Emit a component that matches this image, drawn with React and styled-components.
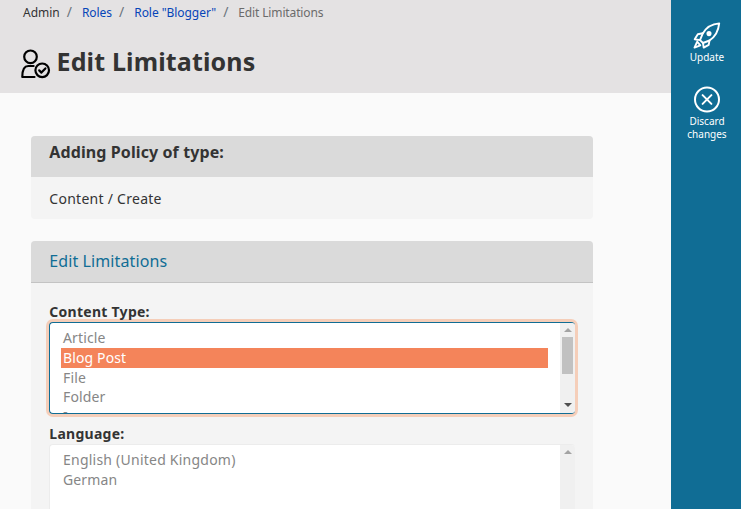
import React from "react";
import styled, { createGlobalStyle } from "styled-components";

const GlobalStyle = createGlobalStyle`
  * { box-sizing: border-box; }
  body {
    margin: 0;
    background: #fafafa;
    color: #333;
    font-family: "Noto Sans", sans-serif;
    overflow: hidden;
  }
`;

const Page = styled.div`
  display: flex;
  width: 741px;
  height: 509px;
  overflow: hidden;
`;

const Main = styled.main`
  width: 671px;
  flex: none;
`;

const Header = styled.header`
  height: 93px;
  padding-left: 23px;
  background: #e4e2e3;
`;

const Breadcrumbs = styled.nav`
  display: flex;
  height: 25px;
  font-size: 12px;
  line-height: 25px;
  white-space: pre;
`;

const Crumb = styled.span`
  color: ${(p) => (p.$current ? "#6b6b6b" : p.$link ? "#0645b8" : "#333")};
  letter-spacing: ${(p) => (p.$current ? "-0.13px" : p.$link ? "-0.05px" : "0")};

  &:not(:first-child)::before {
    content: "/";
    color: #6c757d;
    font-size: 14px;
    line-height: 1;
    padding: 0 10px 0 7px;
  }
`;

const TitleRow = styled.div`
  display: flex;
  align-items: center;
  gap: 5.5px;
  height: 36px;
  margin: 18px 0 0 -3px;

  svg { margin-top: 5px; }
`;

const Title = styled.h1`
  margin: 0;
  font-size: 25px;
  line-height: 36px;
  font-weight: 700;
  letter-spacing: 0.15px;
`;

const Content = styled.div`
  display: flex;
  flex-direction: column;
  gap: 22px;
  width: 562px;
  margin: 43px 0 0 31px;
`;

const Card = styled.section`
  border-radius: 4px;
  overflow: hidden;
  background: #f4f4f4;
`;

const CardHead = styled.h2`
  height: ${(p) => (p.$accent ? 42 : 41)}px;
  margin: 0;
  padding-left: 18.3px;
  background: #dadada;
  border-bottom: ${(p) => (p.$accent ? "1px solid #c3c3c3" : "0")};
  color: ${(p) => (p.$accent ? "#106d95" : "#333")};
  font-size: 16px;
  font-weight: ${(p) => (p.$accent ? 400 : 700)};
  line-height: ${(p) => (p.$accent ? 41 : 33)}px;
  letter-spacing: 0.1px;
`;

const CardText = styled.p`
  height: 42px;
  margin: 0;
  padding-left: 18.3px;
  font-size: 14px;
  line-height: 43px;
  letter-spacing: 0.27px;
`;

const Form = styled.div`
  height: 260px;
  padding: 19px 18px 0;
`;

const Label = styled.div`
  height: 20px;
  padding-left: 0.3px;
  font-size: 14px;
  font-weight: 700;
  line-height: 20px;
  letter-spacing: 0.27px;
`;

const ListBox = styled.div`
  display: flex;
  height: 92px;
  margin-bottom: 10px;
  border: 1px solid ${(p) => (p.$focused ? "#106d95" : "#ececec")};
  border-right: 0;
  border-radius: 4px;
  background: #fff;
  box-shadow: ${(p) => (p.$focused ? "0 0 0 3px #f5ceb9" : "none")};
  overflow: hidden;
`;

const Options = styled.div`
  flex: 1;
  padding: 5px 12px 0 11px;
`;

const Option = styled.div`
  height: ${(p) => (p.$selected ? 20 : 19.6)}px;
  padding-left: 2px;
  background: ${(p) => (p.$selected ? "#f4845a" : "transparent")};
  color: ${(p) => (p.$selected ? "#fff" : "#868686")};
  font-size: 14px;
  line-height: 19.6px;
  letter-spacing: ${(p) => (p.$wide ? 0.23 : 0.13)}px;
`;

const Track = styled.div`
  display: flex;
  flex-direction: column;
  align-items: center;
  width: 15px;
  margin-top: -1px;
  background: #f0f0f0;
`;

const Thumb = styled.div`
  width: 11px;
  height: 37px;
  background: #c1c1c1;
`;

const Arrow = styled.div`
  display: flex;
  align-items: center;
  justify-content: center;
  height: 15px;
  margin-top: ${(p) => (p.$down ? "auto" : "0")};
  margin-bottom: ${(p) => (p.$down ? "1px" : "0")};

  &::before {
    content: "";
    border: 4px solid transparent;
    border-top: ${(p) => (p.$down ? "4px solid #505050" : "0")};
    border-bottom: ${(p) => (p.$down ? "0" : "4px solid #a3a3a3")};
  }
`;

const Sidebar = styled.aside`
  display: flex;
  flex-direction: column;
  align-items: center;
  gap: 22px;
  width: 70px;
  padding: 22px 0 0 2px;
  background: #106d95;
`;

const Action = styled.button`
  display: flex;
  flex-direction: column;
  align-items: center;
  gap: 2px;
  width: 68px;
  padding: 0;
  border: 0;
  background: none;
  color: #fff;
  font: 10px/13px "Noto Sans", sans-serif;
`;

const UserCheckIcon = () => (
  <svg width="31" height="30" viewBox="0 0 31 30" fill="none" stroke="#000" strokeWidth="2.2" strokeLinecap="round" strokeLinejoin="round">
    <circle cx="10.5" cy="7.8" r="6.3" />
    <path d="M14.5 28H2.3c0-5.5 1.2-11 6-11h5.3" />
    <circle cx="22.2" cy="21.3" r="6.8" />
    <path d="m19.2 21.4 2.2 2.2 4-4.2" />
  </svg>
);

const RocketIcon = () => (
  <svg width="28" height="27" viewBox="0 0 28 27" fill="none" stroke="#fff" strokeWidth="1.9" strokeLinejoin="round" strokeLinecap="round">
    <path d="M26.2 1.4c-7 .5-13 4.2-16.4 10L7 18.1l3 2.9 6.5-2.5c5.8-3.7 8.9-9.6 9.7-17.1Z" />
    <path d="m9.8 11.2-5 1-3.1 5 5.3.9m9.5.4-.8 4.3-5 2.8-.7-4.6M4.2 19.6 1.5 25.6l5.8-2.3m-3.1-3.7 3.1 3.7" />
    <circle cx="16" cy="11.6" r="1.6" fill="#fff" />
  </svg>
);

const DiscardIcon = () => (
  <svg width="28" height="27" viewBox="0 0 28 27" fill="none" stroke="#fff" strokeWidth="2" strokeLinecap="round">
    <circle cx="14" cy="13.5" r="12" />
    <path d="m9.6 9.1 8.8 8.8m0-8.8-8.8 8.8" />
  </svg>
);

const SelectList = ({ options, selected, focused }) => (
  <ListBox $focused={focused}>
    <Options>
      {options.map((name) => (
        <Option key={name} $selected={name === selected} $wide={name.length > 12}>{name}</Option>
      ))}
    </Options>
    <Track>
      <Arrow />
      {focused && <Thumb />}
      {focused && <Arrow $down />}
    </Track>
  </ListBox>
);

export default function App() {
  return (
    <>
      <GlobalStyle />
      <Page>
        <Main>
          <Header>
            <Breadcrumbs>
              <Crumb>Admin</Crumb>
              <Crumb $link>Roles</Crumb>
              <Crumb $link>Role "Blogger"</Crumb>
              <Crumb $current>Edit Limitations</Crumb>
            </Breadcrumbs>
            <TitleRow>
              <UserCheckIcon />
              <Title>Edit Limitations</Title>
            </TitleRow>
          </Header>
          <Content>
            <Card>
              <CardHead>Adding Policy of type:</CardHead>
              <CardText>Content / Create</CardText>
            </Card>
            <Card>
              <CardHead $accent>Edit Limitations</CardHead>
              <Form>
                <Label>Content Type:</Label>
                <SelectList options={["Article", "Blog Post", "File", "Folder", "Image"]} selected="Blog Post" focused />
                <Label>Language:</Label>
                <SelectList options={["English (United Kingdom)", "German"]} />
              </Form>
            </Card>
          </Content>
        </Main>
        <Sidebar>
          <Action><RocketIcon />Update</Action>
          <Action><DiscardIcon /><span>Discard<br />changes</span></Action>
        </Sidebar>
      </Page>
    </>
  );
}
